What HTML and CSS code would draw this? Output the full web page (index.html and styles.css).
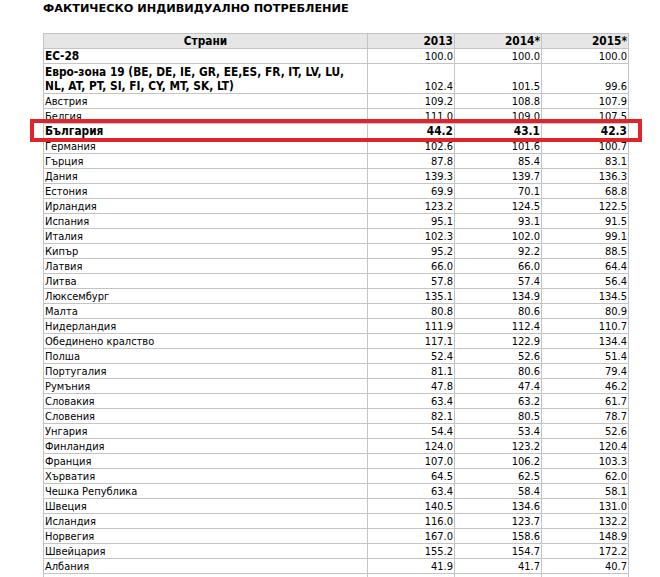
FILE: index.html
```html
<!DOCTYPE html>
<html lang="bg">
<head>
<meta charset="utf-8">
<title>Фактическо индивидуално потребление</title>
<link rel="stylesheet" href="styles.css">
</head>
<body>
<div class="page">
  <h1 class="title">ФАКТИЧЕСКО ИНДИВИДУАЛНО ПОТРЕБЛЕНИЕ</h1>
  <div class="table-wrap">
    <table class="data">
      <colgroup>
        <col class="c-name"><col class="c-num"><col class="c-num"><col class="c-num">
      </colgroup>
      <thead>
        <tr><th class="h-name">Страни</th><th>2013</th><th>2014*</th><th>2015*</th></tr>
      </thead>
      <tbody>
        <tr class="agg"><td>ЕС-28</td><td>100.0</td><td>100.0</td><td>100.0</td></tr>
        <tr class="agg tall"><td>Евро-зона 19 (BE, DE, IE, GR, EE,ES, FR, IT, LV, LU,<br>NL, AT, PT, SI, FI, CY, MT, SK, LT)</td><td>102.4</td><td>101.5</td><td>99.6</td></tr>
        <tr><td>Австрия</td><td>109.2</td><td>108.8</td><td>107.9</td></tr>
        <tr><td>Белгия</td><td>111.0</td><td>109.0</td><td>107.5</td></tr>
        <tr class="b"><td>България</td><td>44.2</td><td>43.1</td><td>42.3</td></tr>
        <tr><td>Германия</td><td>102.6</td><td>101.6</td><td>100.7</td></tr>
        <tr><td>Гърция</td><td>87.8</td><td>85.4</td><td>83.1</td></tr>
        <tr><td>Дания</td><td>139.3</td><td>139.7</td><td>136.3</td></tr>
        <tr><td>Естония</td><td>69.9</td><td>70.1</td><td>68.8</td></tr>
        <tr><td>Ирландия</td><td>123.2</td><td>124.5</td><td>122.5</td></tr>
        <tr><td>Испания</td><td>95.1</td><td>93.1</td><td>91.5</td></tr>
        <tr><td>Италия</td><td>102.3</td><td>102.0</td><td>99.1</td></tr>
        <tr><td>Кипър</td><td>95.2</td><td>92.2</td><td>88.5</td></tr>
        <tr><td>Латвия</td><td>66.0</td><td>66.0</td><td>64.4</td></tr>
        <tr><td>Литва</td><td>57.8</td><td>57.4</td><td>56.4</td></tr>
        <tr><td>Люксембург</td><td>135.1</td><td>134.9</td><td>134.5</td></tr>
        <tr><td>Малта</td><td>80.8</td><td>80.6</td><td>80.9</td></tr>
        <tr><td>Нидерландия</td><td>111.9</td><td>112.4</td><td>110.7</td></tr>
        <tr><td>Обединено кралство</td><td>117.1</td><td>122.9</td><td>134.4</td></tr>
        <tr><td>Полша</td><td>52.4</td><td>52.6</td><td>51.4</td></tr>
        <tr><td>Португалия</td><td>81.1</td><td>80.6</td><td>79.4</td></tr>
        <tr><td>Румъния</td><td>47.8</td><td>47.4</td><td>46.2</td></tr>
        <tr><td>Словакия</td><td>63.4</td><td>63.2</td><td>61.7</td></tr>
        <tr><td>Словения</td><td>82.1</td><td>80.5</td><td>78.7</td></tr>
        <tr><td>Унгария</td><td>54.4</td><td>53.4</td><td>52.6</td></tr>
        <tr><td>Финландия</td><td>124.0</td><td>123.2</td><td>120.4</td></tr>
        <tr><td>Франция</td><td>107.0</td><td>106.2</td><td>103.3</td></tr>
        <tr><td>Хърватия</td><td>64.5</td><td>62.5</td><td>62.0</td></tr>
        <tr><td>Чешка Република</td><td>63.4</td><td>58.4</td><td>58.1</td></tr>
        <tr><td>Швеция</td><td>140.5</td><td>134.6</td><td>131.0</td></tr>
        <tr><td>Исландия</td><td>116.0</td><td>123.7</td><td>132.2</td></tr>
        <tr><td>Норвегия</td><td>167.0</td><td>158.6</td><td>148.9</td></tr>
        <tr><td>Швейцария</td><td>155.2</td><td>154.7</td><td>172.2</td></tr>
        <tr><td>Албания</td><td>41.9</td><td>41.7</td><td>40.7</td></tr>
        <tr><td>&nbsp;</td><td>&nbsp;</td><td>&nbsp;</td><td>&nbsp;</td></tr>
      </tbody>
    </table>
    <div class="highlight"></div>
  </div>
</div>
</body>
</html>
```

FILE: styles.css
```css
html, body {
  margin: 0;
  padding: 0;
  background: #ffffff;
}

.page {
  padding: 0 0 0 43px;
  font-family: "DejaVu Sans Condensed", "DejaVu Sans", Verdana, sans-serif;
  color: #000000;
}

.title {
  margin: 0;
  padding-top: 2px;
  height: 31px;
  font-family: "DejaVu Sans", Verdana, sans-serif;
  font-size: 11.3px;
  line-height: 14px;
  font-weight: bold;
}

.table-wrap {
  position: relative;
  width: 585px;
}

.data {
  border-collapse: collapse;
  table-layout: fixed;
  width: 585px;
  font-size: 11px;
}

.c-name { width: 324px; }
.c-num { width: 87px; }

.data th,
.data td {
  border: 1px solid #c4c4c4;
  padding: 0 1px 0 1px;
  height: 14px;
  line-height: 13px;
  vertical-align: bottom;
  text-align: right;
  white-space: nowrap;
  overflow: hidden;
}

.data th {
  background: #e6e6e6;
  font-weight: bold;
  font-size: 11.8px;
}

.data th.h-name {
  text-align: center;
}

.data td:first-child {
  text-align: left;
}

.data tr.b td,
.data tr.agg td:first-child {
  font-weight: bold;
  font-size: 11.8px;
}

.data tr.tall td {
  height: 29px;
}

.data tr.tall td:first-child {
  line-height: 14px;
}

.highlight {
  position: absolute;
  left: -13px;
  top: 86px;
  width: 612px;
  height: 23px;
  box-sizing: border-box;
  border: 4px solid #e1232a;
  pointer-events: none;
}
```
